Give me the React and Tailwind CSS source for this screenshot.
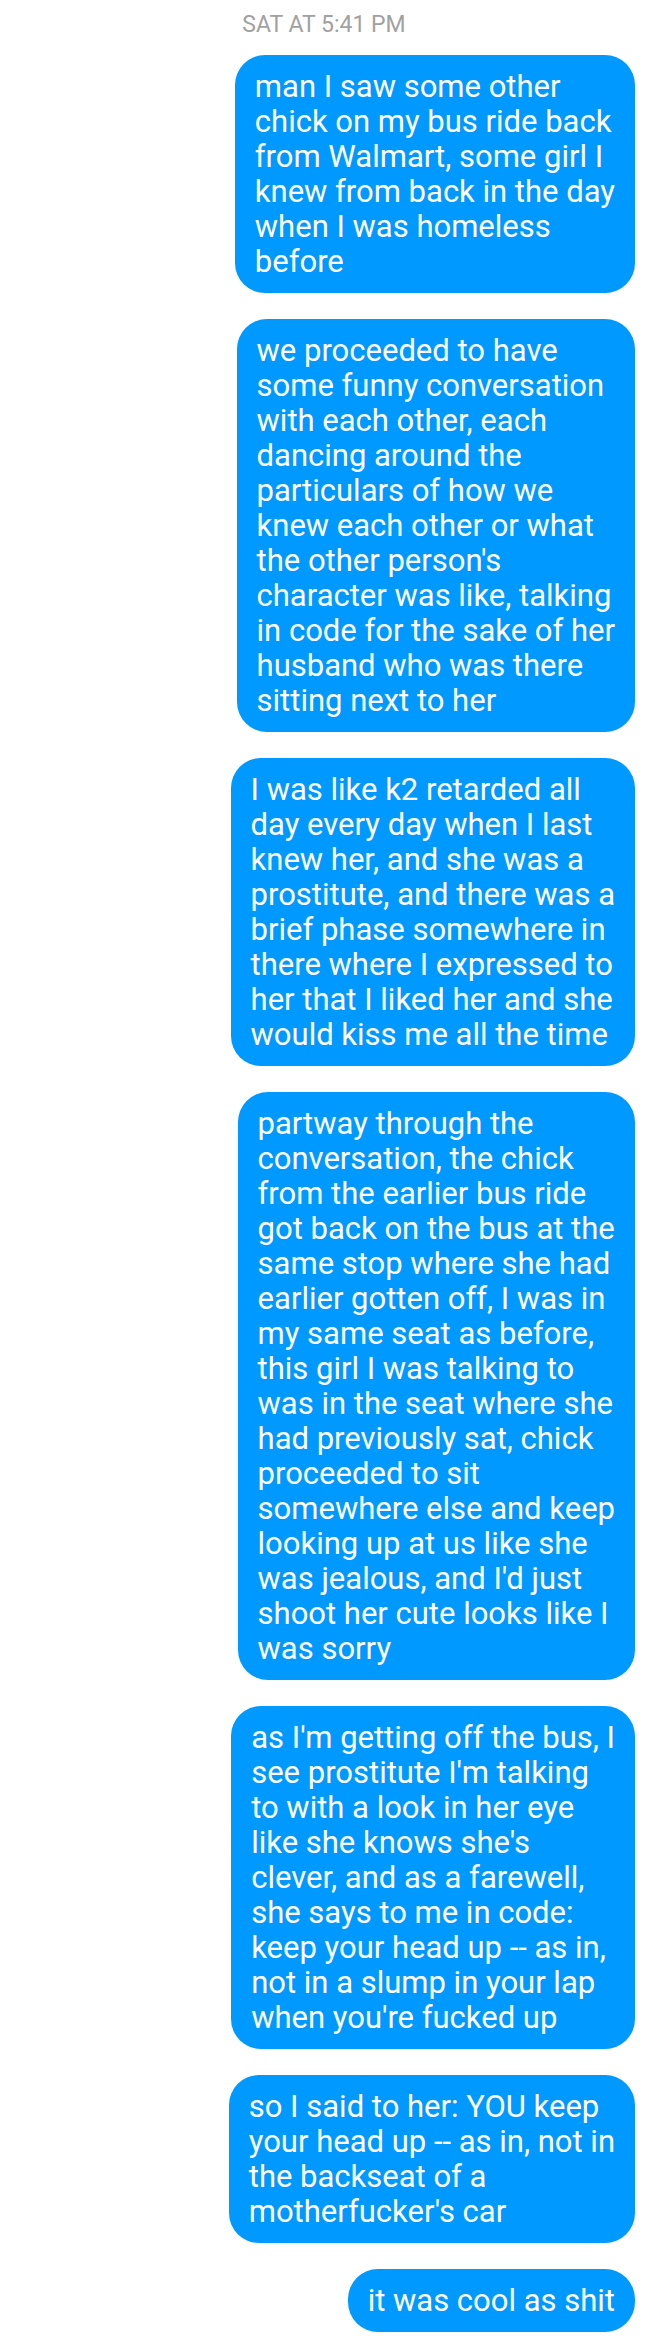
const messages = [
  `man I saw some other
chick on my bus ride back
from Walmart, some girl I
knew from back in the day
when I was homeless
before`,
  `we proceeded to have
some funny conversation
with each other, each
dancing around the
particulars of how we
knew each other or what
the other person's
character was like, talking
in code for the sake of her
husband who was there
sitting next to her`,
  `I was like k2 retarded all
day every day when I last
knew her, and she was a
prostitute, and there was a
brief phase somewhere in
there where I expressed to
her that I liked her and she
would kiss me all the time`,
  `partway through the
conversation, the chick
from the earlier bus ride
got back on the bus at the
same stop where she had
earlier gotten off, I was in
my same seat as before,
this girl I was talking to
was in the seat where she
had previously sat, chick
proceeded to sit
somewhere else and keep
looking up at us like she
was jealous, and I'd just
shoot her cute looks like I
was sorry`,
  `as I'm getting off the bus, I
see prostitute I'm talking
to with a look in her eye
like she knows she's
clever, and as a farewell,
she says to me in code:
keep your head up -- as in,
not in a slump in your lap
when you're fucked up`,
  `so I said to her: YOU keep
your head up -- as in, not in
the backseat of a
motherfucker's car`,
  `it was cool as shit`,
];

export default function App() {
  return (
    <main className="min-h-screen bg-white px-[13px] pt-[11px] pb-4 font-['Roboto',sans-serif]">
      <p className="text-center text-[23px] leading-[28px] text-[#a1a1a1]">
        <time>SAT AT 5:41 PM</time>
      </p>
      <ul className="mt-4 flex flex-col items-end gap-[26px]">
        {messages.map((text) => (
          <li
            key={text}
            className="rounded-[30px] bg-[#0099ff] px-5 py-[14px] text-[31px] leading-[35px] whitespace-pre-line text-white"
          >
            {text}
          </li>
        ))}
      </ul>
    </main>
  );
}
